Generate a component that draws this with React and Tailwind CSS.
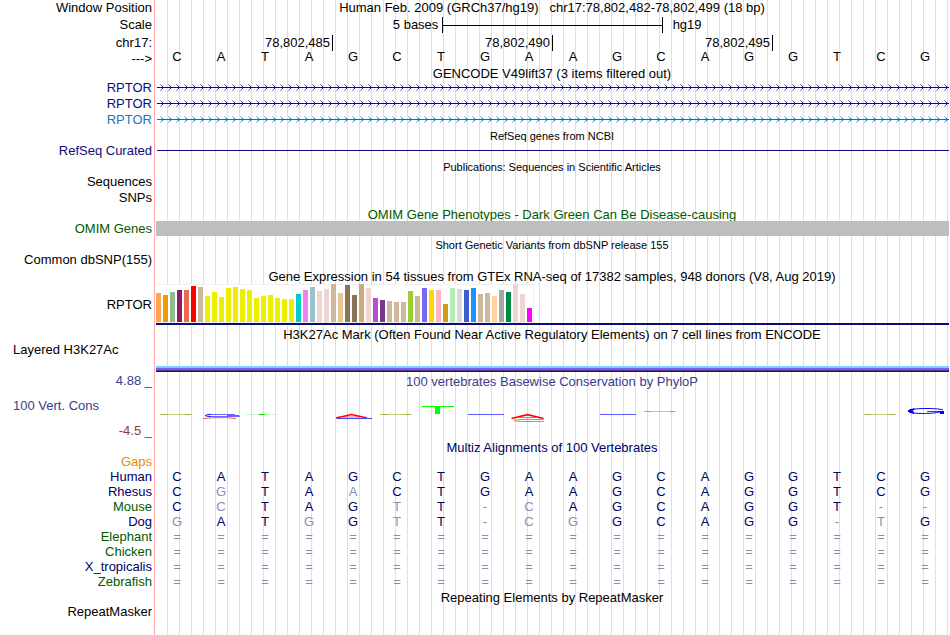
import React from "react";

const BASES = "CATAGCTGAAGCAGGTCG".split("");

const TISSUES = [
  [29, "#FFA54F"], [27, "#EE9A00"], [30, "#8FBC8F"], [32, "#8B1C62"], [32, "#EE6A50"], [36, "#FF0000"],
  [35, "#CDB79E"], [26, "#EEEE00"], [30, "#EEEE00"], [25, "#EEEE00"], [34, "#EEEE00"], [35, "#EEEE00"],
  [33, "#EEEE00"], [32, "#EEEE00"], [24, "#EEEE00"], [26, "#EEEE00"], [27, "#EEEE00"], [24, "#EEEE00"],
  [23, "#EEEE00"], [23, "#EEEE00"], [28, "#00CDCD"], [32, "#EE82EE"], [35, "#9AC0CD"], [31, "#EED5D2"],
  [33, "#EED5D2"], [38, "#CDB79E"], [29, "#EEC591"], [37, "#8B7355"], [27, "#8B7355"], [38, "#CDAA7D"],
  [34, "#EED5D2"], [24, "#B452CD"], [22, "#7A378B"], [21, "#CDB79E"], [20, "#CDB79E"], [20, "#CDB79E"],
  [31, "#9ACD32"], [26, "#CDB79E"], [34, "#7A67EE"], [32, "#FFD700"], [32, "#FFB6C1"], [18, "#CD9B1D"],
  [34, "#B4EEB4"], [33, "#D9D9D9"], [32, "#3A5FCD"], [34, "#1E90FF"], [28, "#CDB79E"], [29, "#CDB79E"],
  [26, "#FFD39B"], [32, "#A6A6A6"], [30, "#008B45"], [38, "#EED5D2"], [28, "#EED5D2"], [14, "#FF00FF"],
];

// Lower-case letters are bases that differ from the human sequence.
const ALIGNMENT = [
  ["Human", "CATAGCTGAAGCAGGTCG", "text-[#000064]"],
  ["Rhesus", "CgTAaCTGAAGCAGGTCG", "text-[#000064]"],
  ["Mouse", "CcTAGtT-cAGCAGGT--", "text-[#005a00]"],
  ["Dog", "gATgGtT-cgGCAGG-tG", "text-[#000064]"],
  ["Elephant", "==================", "text-[#005a00]"],
  ["Chicken", "==================", "text-[#005a00]"],
  ["X_tropicalis", "==================", "text-[#000064]"],
  ["Zebrafish", "==================", "text-[#005a00]"],
];

function Row({ label, labelClass = "", className = "h-4", children }) {
  return (
    <div className={`flex items-center ${className}`}>
      <div className={`w-[155px] shrink-0 pr-[3px] text-right whitespace-nowrap ${labelClass}`}>{label}</div>
      <div className="h-full min-w-0 flex-1">{children}</div>
    </div>
  );
}

function Title({ children, className = "" }) {
  return <h2 className={`flex h-full items-center justify-center whitespace-pre ${className}`}>{children}</h2>;
}

function GeneLine({ id, color }) {
  return (
    <svg className="block h-4 w-full" shapeRendering="crispEdges" aria-hidden="true">
      <defs>
        <pattern id={id} x="2" y="0" width="8" height="16" patternUnits="userSpaceOnUse">
          <rect x="0" y="7" width="8" height="1" fill={color} />
          <g fill={color}>
            <rect x="3" y="4" width="1" height="1" opacity="0.4" />
            <rect x="4" y="5" width="1" height="1" opacity="0.8" />
            <rect x="5" y="6" width="1" height="1" />
            <rect x="5" y="8" width="1" height="1" />
            <rect x="4" y="9" width="1" height="1" opacity="0.8" />
            <rect x="3" y="10" width="1" height="1" opacity="0.4" />
          </g>
        </pattern>
      </defs>
      <rect x="2" y="0" width="100%" height="16" fill={`url(#${id})`} />
    </svg>
  );
}

function FlatC({ x, y }) {
  return (
    <g stroke="#a0a01e" fill="none">
      <path d={`M${x} ${y}h32`} strokeWidth="1" opacity="0.55" />
      <path d={`M${x + 1} ${y}h6M${x + 25} ${y}h5`} strokeWidth="1" opacity="0.7" />
    </g>
  );
}

function ConservationLogo() {
  return (
    <svg className="block h-6 w-full" viewBox="0 0 794 24" preserveAspectRatio="none" fill="none" aria-hidden="true">
      <FlatC x={5} y={14.5} />
      <path d="M55 14.500H80M55 16.500H84" stroke="#1414ff" strokeWidth="0.8" opacity="0.8" />
      <path d="M56 14.300Q44 15.500 56 16.700" stroke="#1414ff" />
      <path d="M72 15.500H84V17" stroke="#1414ff" strokeWidth="0.7" />
      <path d="M48 18.600L58 17.700H72L81 18.600" stroke="#ff3c3c" strokeWidth="0.9" />
      <path d="M91 14.5h32" stroke="#00e600" opacity="0.2" />
      <path d="M104 14.5h6" stroke="#00e600" />
      <path d="M181 18L196.500 14.600L212 18" stroke="#ff0000" strokeWidth="1.5" />
      <path d="M188 17h17" stroke="#ff0000" strokeWidth="0.6" />
      <path d="M182 18.500h35" stroke="#4646ff" />
      <FlatC x={225} y={14.5} />
      <path d="M267 6.500h32" stroke="#00ff00" />
      <path d="M280 6h5v8h-5z" fill="#00ff00" />
      <path d="M313 14.500h36M445 14.500h36" stroke="#5a5aff" />
      <path d="M356.500 18.500L372.500 14.600L388.500 18.500" stroke="#ff0000" strokeWidth="1.600" />
      <path d="M364 17.500h17" stroke="#ff0000" strokeWidth="0.6" />
      <path d="M389 19.500H366Q352 20.500 366 21.500H389" stroke="#a0a01e" strokeWidth="0.9" />
      <FlatC x={489} y={11.5} />
      <FlatC x={709} y={14.5} />
      <path d="M788 9.800C782 8 755 7.700 754 11S778 14 784 12" stroke="#0000ff" strokeWidth="1" />
      <path d="M759 8.800Q747 11 759 13.300Q756 11 759 8.800Z" fill="#0000ff" stroke="#0000ff" />
      <path d="M772 11.500h13" stroke="#0000ff" strokeWidth="0.8" />
      <path d="M784 11h5v3h-4z" fill="#0000ff" />
    </svg>
  );
}

function baseClass(ch) {
  return /[A-Z]/.test(ch) ? "text-[#000064]" : "text-[#8c8cb9]";
}

export default function App() {
  return (
    <main className="mr-px flex min-h-screen flex-col bg-[linear-gradient(#ffaaaa,#ffaaaa),repeating-linear-gradient(90deg,transparent_0_11px,#dcdcf8_11px_12px)] bg-[length:1px_100%,100%_100%] bg-[position:154px_0,156px_0] bg-no-repeat font-['Liberation_Sans',Arial,sans-serif] text-[13px] leading-4 text-black">
      <Row label="Window Position">
        <Title>{"Human Feb. 2009 (GRCh37/hg19)   chr17:78,802,482-78,802,499 (18 bp)"}</Title>
      </Row>
      <Row label="Scale" className="h-[18px]">
        <div className="grid h-full grid-cols-[13fr_10fr_13fr] items-center pl-px">
          <div className="pr-1 text-right">5 bases</div>
          <div className="flex h-4 items-center border-x border-black">
            <div className="h-px w-full bg-black" />
          </div>
          <div className="pl-2.5">hg19</div>
        </div>
      </Row>
      <Row label="chr17:" className="h-[17px]">
        <div className="grid h-full grid-cols-[repeat(18,minmax(0,1fr))] items-center pl-0.5">
          <div className="col-span-4 flex justify-end border-r border-black pr-0.5">78,802,485</div>
          <div className="col-span-5 flex justify-end border-r border-black pr-0.5">78,802,490</div>
          <div className="col-span-5 flex justify-end border-r border-black pr-0.5">78,802,495</div>
        </div>
      </Row>
      <Row label="--->" className="h-[15px]">
        <div className="grid grid-cols-[repeat(18,minmax(0,1fr))] pr-0.5 text-center leading-3">
          {BASES.map((b, i) => (
            <span key={i}>{b}</span>
          ))}
        </div>
      </Row>
      <Row className="h-3.5">
        <Title className="pt-0.5">GENCODE V49lift37 (3 items filtered out)</Title>
      </Row>
      <Row label="RPTOR" labelClass="text-[#0c0c78]">
        <GeneLine id="gene-a" color="#0c0c78" />
      </Row>
      <Row label="RPTOR" labelClass="text-[#0c0c78]">
        <GeneLine id="gene-b" color="#0c0c78" />
      </Row>
      <Row label="RPTOR" labelClass="text-[#1e78b4]">
        <GeneLine id="gene-c" color="#0a6eaa" />
      </Row>
      <Row>
        <Title className="text-[11px]">RefSeq genes from NCBI</Title>
      </Row>
      <Row label="RefSeq Curated" labelClass="text-[#0c0c78]" className="h-3.5">
        <div className="flex h-full items-center pb-px pl-0.5">
          <div className="h-px w-full bg-[#0c0c78]" />
        </div>
      </Row>
      <Row>
        <Title className="pt-0.5 text-[11px]">Publications: Sequences in Scientific Articles</Title>
      </Row>
      <Row label="Sequences" />
      <Row label="SNPs" />
      <Row className="h-[15px]">
        <Title className="pt-0.5 text-[#005a00]">OMIM Gene Phenotypes - Dark Green Can Be Disease-causing</Title>
      </Row>
      <Row label="OMIM Genes" labelClass="text-[#005a00]" className="h-[15px]">
        <div className="ml-px h-full bg-[#bebebe]" />
      </Row>
      <Row>
        <Title className="pt-0.5 text-[11px]">Short Genetic Variants from dbSNP release 155</Title>
      </Row>
      <Row label="Common dbSNP(155)" />
      <Row>
        <Title className="pt-0.5">Gene Expression in 54 tissues from GTEx RNA-seq of 17382 samples, 948 donors (V8, Aug 2019)</Title>
      </Row>
      <Row label="RPTOR" className="h-[42px]">
        <div className="ml-px">
          <div className="flex h-[39px] w-[378px] items-end gap-0.5 border-y border-r border-[#f0f0f0] bg-white">
            {TISSUES.map(([h, c], i) => (
              <div key={i} className="w-[5px] shrink-0" style={{ height: h, backgroundColor: c }} />
            ))}
          </div>
          <div className="h-0.5 bg-[#0c0c78]" />
        </div>
      </Row>
      <Row>
        <Title className="pt-0.5">H3K27Ac Mark (Often Found Near Active Regulatory Elements) on 7 cell lines from ENCODE</Title>
      </Row>
      <div className="flex h-[30px]">
        <div className="w-[156px] shrink-0 pl-[13px]">Layered H3K27Ac</div>
        <div className="flex flex-1 flex-col justify-end">
          <div className="h-0.5 bg-[#78d2ff]" />
          <div className="h-0.5 bg-[#6464fa]" />
          <div className="h-px bg-[#643278]" />
          <div className="h-px bg-[#28104b]" />
        </div>
      </div>
      <Row label="4.88 _" labelClass="text-[#3c3c8c]" className="h-[18px]">
        <Title className="pt-0.5 text-[#3c3c8c]">100 vertebrates Basewise Conservation by PhyloP</Title>
      </Row>
      <div className="flex h-[49px]">
        <div className="flex w-[155px] shrink-0 flex-col justify-between pt-2 pr-[3px] pl-[13px]">
          <div className="text-[#3c3c8c]">100 Vert. Cons</div>
          <div className="text-right text-[#8c3c3c]">-4.5 _</div>
        </div>
        <div className="flex-1 pt-2.5">
          <ConservationLogo />
        </div>
      </div>
      <Row className="h-[15px]">
        <Title className="pt-0.5 text-[#000064]">Multiz Alignments of 100 Vertebrates</Title>
      </Row>
      <Row label="Gaps" labelClass="text-[#e68c00]" className="h-[15px]" />
      <div className="pr-0.5">
        <table className="w-full table-fixed border-collapse leading-[15px]">
          <tbody>
            {ALIGNMENT.map(([name, seq, color]) => (
              <tr key={name} className="h-[15px]">
                <th scope="row" className={`w-[155px] p-0 pr-[3px] text-right font-normal ${color}`}>
                  {name}
                </th>
                {seq.split("").map((ch, i) => (
                  <td key={i} className={`p-0 text-center ${baseClass(ch)}`}>
                    {ch.toUpperCase()}
                  </td>
                ))}
              </tr>
            ))}
          </tbody>
        </table>
      </div>
      <Row className="h-[15px]">
        <Title className="pt-0.5">Repeating Elements by RepeatMasker</Title>
      </Row>
      <Row label="RepeatMasker" />
    </main>
  );
}
